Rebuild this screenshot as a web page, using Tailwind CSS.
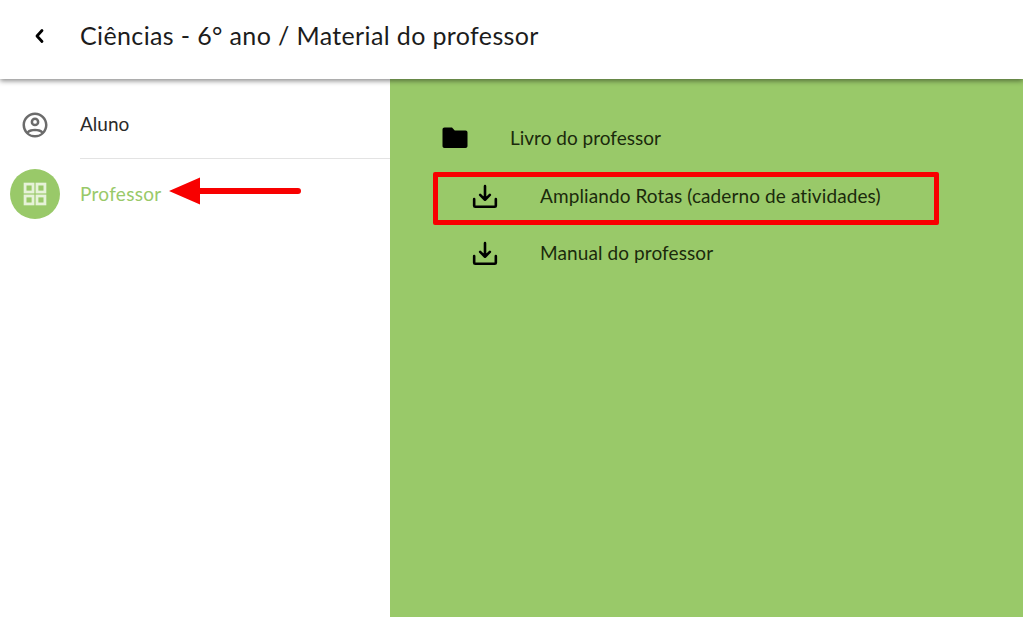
<!DOCTYPE html>
<html lang="pt">
<head>
    <meta charset="UTF-8">
    <title>Material do professor</title>
    <script src="https://cdn.jsdelivr.net/npm/@tailwindcss/browser@4"></script>
</head>
<body class="font-['Lato',sans-serif]">
    <div class="relative flex flex-col h-[617px] w-[1023px] overflow-hidden bg-white">
        <header class="relative z-10 flex items-center h-[79px] pb-[8px] shrink-0 bg-white shadow-[0_2px_5px_rgba(0,0,0,0.45)]">
            <div class="w-[80px] flex justify-center">
                <svg width="24" height="24" viewBox="0 0 24 24" fill="none" stroke="#000" stroke-width="2.8" stroke-linecap="round" stroke-linejoin="round"><path d="M14 6.500l-5 5.500 5 5.500"/></svg>
            </div>
            <h1 class="text-[25px] text-[#1c1c1c] tracking-[0.37px]">Ciências - 6° ano / Material do professor</h1>
        </header>
        <div class="flex flex-1">
            <aside class="w-[390px] shrink-0 pt-[11px]">
                <div class="flex items-center h-[69px]">
                    <div class="w-[80px] pr-[10px] flex justify-center">
                        <svg width="30" height="30" viewBox="0 0 24 24" fill="#6b6b6b"><path d="M12 2C6.48 2 2 6.48 2 12s4.48 10 10 10 10-4.48 10-10S17.52 2 12 2zm0 2c4.42 0 8 3.58 8 8 0 1.85-.63 3.55-1.69 4.9C16.9 15.500 14.6 15 12 15s-4.900.500-6.310 1.900A7.960 7.960 0 0 1 4 12c0-4.420 3.580-8 8-8zm0 13c2.200 0 4.100.450 5 1.500A7.960 7.960 0 0 1 12 20a7.960 7.960 0 0 1-5-1.500c.900-1.050 2.800-1.500 5-1.500zm0-11a3.500 3.500 0 1 0 0 7 3.500 3.500 0 0 0 0-7zm0 2a1.500 1.500 0 1 1 0 3 1.500 1.500 0 0 1 0-3z"/></svg>
                    </div>
                    <div class="flex-1 flex items-center h-full border-b border-[#e3e3e3] text-[19px] text-[#2a2a2a]">Aluno</div>
                </div>
                <div class="flex items-center h-[70px]">
                    <div class="w-[80px] pl-[10px]">
                        <div class="w-[50px] h-[50px] rounded-full bg-[#99c969] flex items-center justify-center">
                            <svg width="28" height="28" viewBox="0 0 24 24" fill="none" stroke="#e6f2d8" stroke-width="2.400"><rect x="3.500" y="3.500" width="6.800" height="6.800"/><rect x="13.700" y="3.500" width="6.800" height="6.800"/><rect x="3.500" y="13.700" width="6.800" height="6.800"/><rect x="13.700" y="13.700" width="6.800" height="6.800"/></svg>
                        </div>
                    </div>
                    <div class="text-[19px] text-[#99c969] tracking-[0.3px]">Professor</div>
                </div>
            </aside>
            <main class="flex-1 bg-[#99c969] pt-[31px] pl-[44px] text-[19px] text-[#1b2a0c]">
                <div class="flex items-center h-[56px] mb-[2px]">
                    <div class="w-[76px] pl-[6px]">
                        <svg width="30" height="30" viewBox="0 0 24 24" fill="#000"><path d="M3.600 3.600h6l2.200 2.400h8.600c1 0 1.600.700 1.600 1.600v10.800c0 1-.700 1.600-1.600 1.600H3.600c-1 0-1.600-.700-1.600-1.600V5.200c0-1 .700-1.600 1.600-1.600z"/></svg>
                    </div>
                    <span>Livro do professor</span>
                </div>
                <div class="flex items-center h-[57px] pl-[38px]">
                    <div class="w-[68px]">
                        <svg width="26" height="26" viewBox="0 0 24 24" fill="none" stroke="#000" stroke-width="2.400" stroke-linecap="round" stroke-linejoin="round"><path d="M12 2v12M7.500 10l4.500 4.500 4.500-4.500M2 14v6c0 .600.400 1 1 1h18c.600 0 1-.400 1-1v-6"/></svg>
                    </div>
                    <span class="tracking-[0.1px]">Ampliando Rotas (caderno de atividades)</span>
                </div>
                <div class="flex items-center h-[57px] pl-[38px]">
                    <div class="w-[68px]">
                        <svg width="26" height="26" viewBox="0 0 24 24" fill="none" stroke="#000" stroke-width="2.400" stroke-linecap="round" stroke-linejoin="round"><path d="M12 2v12M7.500 10l4.500 4.500 4.500-4.500M2 14v6c0 .600.400 1 1 1h18c.600 0 1-.400 1-1v-6"/></svg>
                    </div>
                    <span class="tracking-[0.1px]">Manual do professor</span>
                </div>
            </main>
        </div>
        <!-- annotations drawn over the screenshot -->
        <div class="absolute left-[433px] top-[172px] w-[506px] h-[53px] border-[5px] border-[#f80000] rounded-[2px]"></div>
        <svg class="absolute left-[165px] top-[175px]" width="140" height="32" viewBox="0 0 140 32"><path d="M4 16L35 2.500v10.500h98a3 3 0 0 1 0 6H35v10.500z" fill="#f80000"/></svg>
    </div>
</body>
</html>
